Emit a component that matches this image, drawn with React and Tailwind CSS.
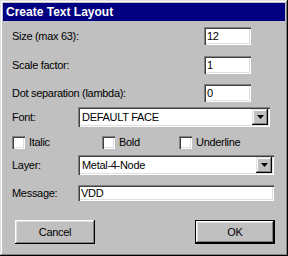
import React from "react";

const sunken =
  "shadow-[inset_1px_1px_0_#808080,inset_2px_2px_0_#404040,inset_-1px_-1px_0_#ffffff,inset_-2px_-2px_0_#dfdfdf]";
const raised =
  "shadow-[inset_-1px_-1px_0_#000000,inset_1px_1px_0_#dfdfdf,inset_-2px_-2px_0_#808080,inset_2px_2px_0_#ffffff]";

function Input({ value, w, h }) {
  return (
    <div className={`bg-white ${sunken} flex items-center pl-[3px] ${w} ${h}`}>
      <span className="leading-none">{value}</span>
    </div>
  );
}

function Arrow() {
  return (
    <svg width="7" height="4" viewBox="0 0 7 4">
      <path d="M0 0H7L3.5 4Z" fill="#000" />
    </svg>
  );
}

function Select({ value, w }) {
  return (
    <div className={`bg-white ${sunken} flex items-center pl-[4px] pr-[2px] h-[20px] ${w}`}>
      <span className="flex-1 leading-none">{value}</span>
      <div className={`w-[16px] h-[16px] bg-[#c0c0c0] ${raised} flex items-center justify-center`}>
        <Arrow />
      </div>
    </div>
  );
}

function Check({ label, x }) {
  return (
    <div className="flex items-center gap-[4px]">
      <div className={`w-[13px] h-[13px] bg-white ${sunken}`} />
      <span className="leading-none">{label}</span>
    </div>
  );
}

export default function App() {
  return (
    <div
      className="w-[288px] h-[256px] bg-[#c0c0c0] p-[3px] flex flex-col text-[11px] tracking-[-0.3px] text-black shadow-[inset_-1px_-1px_0_#000000,inset_1px_1px_0_#dfdfdf,inset_-2px_-2px_0_#808080,inset_2px_2px_0_#ffffff]"
      style={{ fontFamily: '"Liberation Sans", Arial, sans-serif' }}
    >
      <div className="h-[18px] bg-[#000080] text-white font-bold text-[12px] tracking-normal flex items-center pl-[3px]">
        Create Text Layout
      </div>

      <div className="flex flex-col pl-[9px]">
        <div className="mt-[6px] flex items-center h-[18px]">
          <span className="w-[192px]">Size (max 63):</span>
          <Input value="12" w="w-[47px]" h="h-[18px]" />
        </div>
        <div className="mt-[11px] flex items-center h-[18px]">
          <span className="w-[192px]">Scale factor:</span>
          <Input value="1" w="w-[47px]" h="h-[18px]" />
        </div>
        <div className="mt-[10px] flex items-center h-[18px]">
          <span className="w-[192px]">Dot separation (lambda):</span>
          <Input value="0" w="w-[47px]" h="h-[18px]" />
        </div>
        <div className="mt-[5px] flex items-center h-[20px]">
          <span className="w-[66px]">Font:</span>
          <Select value="DEFAULT FACE" w="w-[192px]" />
        </div>
        <div className="mt-[9px] flex items-center h-[13px]">
          <div className="w-[90px]">
            <Check label="Italic" />
          </div>
          <div className="w-[77px]">
            <Check label="Bold" />
          </div>
          <Check label="Underline" />
        </div>
        <div className="mt-[6px] flex items-center h-[20px]">
          <span className="w-[66px]">Layer:</span>
          <Select value="Metal-4-Node" w="w-[196px]" />
        </div>
        <div className="mt-[10px] flex items-center h-[16px]">
          <span className="w-[66px]">Message:</span>
          <Input value="VDD" w="w-[196px]" h="h-[16px]" />
        </div>
        <div className="mt-[19px] flex items-center h-[24px]">
          <div className="ml-[3px] w-[80px] h-[24px] flex items-center justify-center bg-[#c0c0c0] shadow-[inset_-1px_-1px_0_#000000,inset_1px_1px_0_#ffffff,inset_-2px_-2px_0_#808080,inset_2px_2px_0_#dfdfdf]">
            Cancel
          </div>
          <div className="ml-[100px] w-[80px] h-[24px] flex items-center justify-center bg-[#c0c0c0] border border-black shadow-[inset_-1px_-1px_0_#000000,inset_1px_1px_0_#ffffff,inset_-2px_-2px_0_#808080,inset_2px_2px_0_#dfdfdf]">
            OK
          </div>
        </div>
      </div>
    </div>
  );
}
